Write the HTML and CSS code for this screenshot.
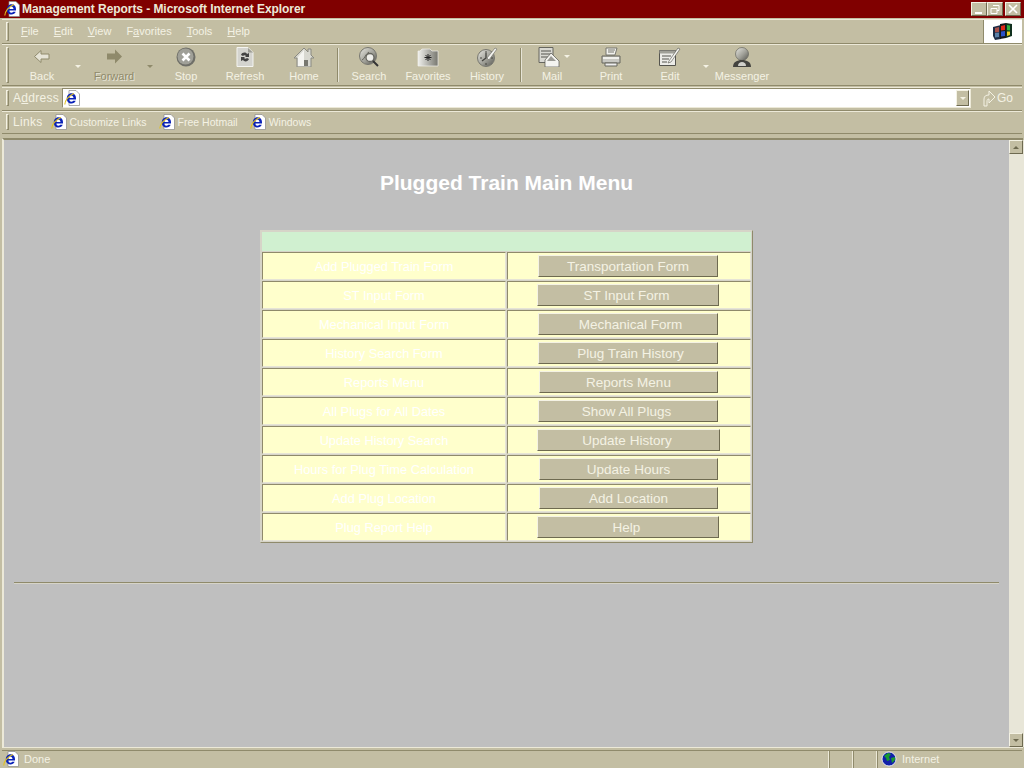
FILE: index.html
```html
<!DOCTYPE html>
<html lang="en">
<head>
    <meta charset="UTF-8">
    <title>Management Reports - Microsoft Internet Explorer</title>
    <link rel="stylesheet" href="styles.css">
</head>
<body>
<svg class="defs" width="0" height="0">
    <defs>
        <linearGradient id="metal" x1="0" y1="0" x2="1" y2="1">
            <stop offset="0" stop-color="#e8e8e2"/>
            <stop offset=".55" stop-color="#a0a098"/>
            <stop offset="1" stop-color="#55554f"/>
        </linearGradient>
        <linearGradient id="folder" x1="0" y1="0" x2="1" y2="0">
            <stop offset="0" stop-color="#f0f0ec"/>
            <stop offset="1" stop-color="#77776f"/>
        </linearGradient>
    </defs>
    <symbol id="ie" viewBox="0 0 16 16">
        <path d="M5 .5h7l3.500 3.500v11.500H5z" fill="#fff" stroke="#8a8a8a" stroke-width=".7"/>
        <path d="M2.800 8h9.200c0-3-2-4.800-4.600-4.800S2.800 5.500 2.800 8.500s2 5 4.600 5c2 0 3.600-1 4.300-2.700H9.200c-.4.600-1 1-1.800 1-1.200 0-2-1-2.100-2.300h6.700V8H5.300c.1-1.300 1-2.500 2.100-2.500S9.400 6.500 9.500 8" fill="#0a22b8"/>
        <path d="M.8 14.500C.8 11 4.500 5.500 10 3.500" fill="none" stroke="#e0c020" stroke-width="1.100"/>
    </symbol>
</svg>
<div class="window">
    <div class="titlebar">
        <svg class="icon16"><use href="#ie"/></svg>
        <span class="title-text">Management Reports - Microsoft Internet Explorer</span>
        <div class="win-buttons">
            <button class="win-btn"><svg width="14" height="12"><path d="M3 10h7" stroke="#fff" stroke-width="2"/></svg></button>
            <button class="win-btn"><svg width="14" height="12"><path d="M5 2.500h6v5h-2M3 5.500h6v5H3z" fill="none" stroke="#fff"/></svg></button>
            <button class="win-btn win-close"><svg width="14" height="12"><path d="M3 2l8 8M11 2l-8 8" stroke="#fff" stroke-width="1.700"/></svg></button>
        </div>
    </div>

    <div class="band menubar">
        <span class="grip"></span>
        <nav class="menu">
            <span><u>F</u>ile</span>
            <span><u>E</u>dit</span>
            <span><u>V</u>iew</span>
            <span>F<u>a</u>vorites</span>
            <span><u>T</u>ools</span>
            <span><u>H</u>elp</span>
        </nav>
        <div class="brand">
            <svg width="20" height="19" viewBox="0 0 20 19">
                <path d="M0 5l8-2v14l-6 1-2-4z" fill="#1c2a44"/>
                <path d="M2 6l4-1v5l-4 .5z" fill="#a8504a"/>
                <path d="M2 11l4-.5v4.500l-4 .5z" fill="#5a80a8"/>
                <path d="M7 2l6-1v15l-6 1z" fill="#15181c"/>
                <path d="M8 4l4-1v5l-4 .5z" fill="#e02818"/>
                <path d="M8 9.500l4-.5v5l-4 .5z" fill="#2a50c8"/>
                <path d="M13 1l6 1v12l-6 2z" fill="#10301e"/>
                <path d="M14 3l3 .5v5l-3-.2z" fill="#30b040"/>
                <path d="M14 9.500l3 .1v3.400l-3 1z" fill="#f0d020"/>
            </svg>
        </div>
    </div>

    <div class="band toolbar">
        <span class="grip"></span>
        <div class="tool">
            <svg class="tool-icon" viewBox="0 0 22 20"><path d="M3.500 9.500l6.500-6v3.500h8v5h-8v3.500z" fill="#e6e4d6" stroke="#8f8a6b"/></svg>
            <span>Back</span>
        </div>
        <span class="caret"></span>
        <div class="tool tool-off">
            <svg class="tool-icon" viewBox="0 0 22 20"><path d="M19 9.500l-7-7v4H4v6h8v4z" fill="#8f8a6b"/></svg>
            <span>Forward</span>
        </div>
        <span class="caret caret-off"></span>
        <div class="tool">
            <svg class="tool-icon" viewBox="0 0 22 20"><circle cx="11" cy="10" r="9.500" fill="#6f6f68"/><circle cx="10.500" cy="9.500" r="8" fill="#a0a098"/><path d="M7.500 6.500l7 7M14.500 6.500l-7 7" stroke="#fff" stroke-width="2.600"/></svg>
            <span>Stop</span>
        </div>
        <div class="tool">
            <svg class="tool-icon" viewBox="0 0 22 20"><path d="M3 .5h11l5 5v14H3z" fill="#d4d4cf" stroke="#f4f4f0"/><path d="M14 1v4.500h5" fill="#9c9c94"/><path d="M7 8c1-3 5-3 6-1l2-1v4h-4l1-1c-1-1-2-1-3 0zM15 12c-1 3-5 3-6 1l-2 1v-4h4l-1 1c1 1 2 1 3 0z" fill="#444"/></svg>
            <span>Refresh</span>
        </div>
        <div class="tool">
            <svg class="tool-icon" viewBox="0 0 22 20"><path d="M11 1L1 11h3v9h14v-9h3l-3-3V2h-3v3z" fill="#d8d8d0" stroke="#8a8a82"/><path d="M11 3l-6 7v9h6z" fill="#f4f4f0"/><path d="M11 13h4v6h-4z" fill="#77776f"/></svg>
            <span>Home</span>
        </div>
        <span class="tool-sep"></span>
        <div class="tool">
            <svg class="tool-icon" viewBox="0 0 22 20"><circle cx="10" cy="9" r="8.500" fill="url(#metal)" stroke="#77776f"/><path d="M4 13c3-1 3-6 7-8" fill="none" stroke="#66665f"/><circle cx="12" cy="10.500" r="4" fill="#eeeeea" stroke="#66665f" stroke-width="1.300"/><path d="M15 14l5 5" stroke="#333" stroke-width="2"/></svg>
            <span>Search</span>
        </div>
        <div class="tool">
            <svg class="tool-icon" viewBox="0 0 22 20"><path d="M1 4h2l2-2h8l2 2h6v15H1z" fill="url(#folder)" stroke="#f0f0ec" stroke-width=".7"/><path d="M11 7v7M7.500 10.500h7M8.500 8l5 5M13.500 8l-5 5" stroke="#222"/></svg>
            <span>Favorites</span>
        </div>
        <div class="tool">
            <svg class="tool-icon" viewBox="0 0 22 20"><circle cx="10" cy="11" r="8.500" fill="url(#metal)" stroke="#77776f"/><path d="M10 4v2M4 11h2M10 16v2M15 11h2" stroke="#44443f"/><path d="M10 6v5l-4 3" fill="none" stroke="#44443f" stroke-width="1.300"/><path d="M11 11l8-10 2 1-8 11z" fill="#f2f2ee" stroke="#77776f" stroke-width=".7"/></svg>
            <span>History</span>
        </div>
        <span class="tool-sep"></span>
        <div class="tool">
            <div class="tool-row">
                <svg class="tool-icon" viewBox="0 0 22 20"><path d="M1 .5h14v15H1z" fill="#d8d8d2" stroke="#66665f"/><path d="M3 4h10M3 7h10M3 10h7" stroke="#55554f"/><path d="M7 13l6-7 8 8v6H7z" fill="#f4f4f0" stroke="#55554f" stroke-width=".7"/><path d="M9 14l4-5 5 5z" fill="#9a9a94"/></svg>
                <span class="caret caret-inline"></span>
            </div>
            <span>Mail</span>
        </div>
        <div class="tool">
            <svg class="tool-icon" viewBox="0 0 22 20"><path d="M6 1h11l-2 7H6z" fill="#f2f2ee" stroke="#77776f"/><path d="M8 3h7M8 5h6" stroke="#77776f"/><path d="M2 9h18v7H2z" fill="#c8c8c2" stroke="#66665f"/><path d="M3 10h16v2H3z" fill="#f0f0ec"/><path d="M5 16h12v3H5z" fill="#eee" stroke="#66665f"/></svg>
            <span>Print</span>
        </div>
        <div class="tool">
            <svg class="tool-icon" viewBox="0 0 22 20"><path d="M.5 3.500h16v15H.5z" fill="#ecece8" stroke="#55554f"/><path d="M.5 3.500h16v3H.5z" fill="#a0a098"/><path d="M3 9h9M3 12h7M3 15h5" stroke="#55554f"/><path d="M10 14l9-13 2 1-9 13-3 1z" fill="#f4f4f0" stroke="#66665f" stroke-width=".7"/></svg>
            <span>Edit</span>
        </div>
        <span class="caret"></span>
        <div class="tool">
            <svg class="tool-icon" viewBox="0 0 22 20"><circle cx="11" cy="7" r="6.500" fill="url(#metal)" stroke="#66665f" stroke-width=".7"/><path d="M2 20c0-5 4-7 9-7s9 2 9 7z" fill="#44443f"/><path d="M7 19c0-3 2-4 4-4s4 1 4 4z" fill="#d0d0ca"/></svg>
            <span>Messenger</span>
        </div>
    </div>

    <div class="band addressbar">
        <span class="grip"></span>
        <span class="addr-label">A<u>d</u>dress</span>
        <div class="addr-box">
            <svg class="icon16"><use href="#ie"/></svg>
            <span class="addr-drop"><span class="caret caret-dark"></span></span>
        </div>
        <div class="go">
            <svg width="14" height="17" viewBox="0 0 14 17"><path d="M2 16V9c0-3 2-4 5-4V1l6 6-6 6V9c-2 0-2 1-2 3v4z" fill="#c3bea3" stroke="#f4f2e4"/></svg>
            <span>Go</span>
        </div>
    </div>

    <div class="band linksbar">
        <span class="grip"></span>
        <span class="links-label">Links</span>
        <span class="link link-first"><svg class="icon16"><use href="#ie"/></svg>Customize Links</span>
        <span class="link"><svg class="icon16"><use href="#ie"/></svg>Free Hotmail</span>
        <span class="link"><svg class="icon16"><use href="#ie"/></svg>Windows</span>
    </div>

    <div class="frame">
        <main class="content">
            <h1>Plugged Train Main Menu</h1>
            <table class="menu-table">
                <tr><td colspan="2" class="head-cell"></td></tr>
                <tr><td class="label">Add Plugged Train Form</td><td class="action"><button class="form-btn btn-a">Transportation Form</button></td></tr>
                <tr><td class="label">ST Input Form</td><td class="action"><button class="form-btn btn-b text-left">ST Input Form</button></td></tr>
                <tr><td class="label">Mechanical Input Form</td><td class="action"><button class="form-btn btn-a text-right">Mechanical Form</button></td></tr>
                <tr><td class="label">History Search Form</td><td class="action"><button class="form-btn btn-a text-right">Plug Train History</button></td></tr>
                <tr><td class="label">Reports Menu</td><td class="action"><button class="form-btn btn-c">Reports Menu</button></td></tr>
                <tr><td class="label">All Plugs for All Dates</td><td class="action"><button class="form-btn btn-a text-left">Show All Plugs</button></td></tr>
                <tr><td class="label">Update History Search</td><td class="action"><button class="form-btn btn-d text-left">Update History</button></td></tr>
                <tr><td class="label">Hours for Plug Time Calculation</td><td class="action"><button class="form-btn btn-c">Update Hours</button></td></tr>
                <tr><td class="label">Add Plug Location</td><td class="action"><button class="form-btn btn-c">Add Location</button></td></tr>
                <tr><td class="label">Plug Report Help</td><td class="action"><button class="form-btn btn-b text-left">Help</button></td></tr>
            </table>
            <hr class="rule">
        </main>
        <div class="scrollbar">
            <span class="scroll-btn"><span class="caret caret-up"></span></span>
            <span class="scroll-btn"><span class="caret caret-olive"></span></span>
        </div>
    </div>

    <div class="statusbar">
        <div class="status-main"><svg class="icon16"><use href="#ie"/></svg><span>Done</span></div>
        <div class="status-pane pane-small"></div>
        <div class="status-pane pane-small"></div>
        <div class="status-pane pane-zone">
            <svg width="16" height="16" viewBox="0 0 16 16"><circle cx="8" cy="8" r="7" fill="#1020a8" stroke="#fff" stroke-width=".8"/><path d="M3 5l4-3 3 1-2 3 1 3-3 1-1-3zM10 7l4-1 0 3-3 3z" fill="#189a30"/></svg>
            <span>Internet</span>
        </div>
    </div>
</div>
</body>
</html>
```

FILE: styles.css
```css
* {
    box-sizing: border-box;
}

html, body {
    margin: 0;
    height: 100%;
    overflow: hidden;
}

body {
    font-family: "Liberation Sans", Arial, sans-serif;
    font-size: 11px;
    color: #f4f2e4;
    background-color: #c3bea3;
}

.defs {
    position: absolute;
}

.window {
    display: flex;
    flex-direction: column;
    width: 1024px;
    height: 768px;
}

.icon16 {
    width: 16px;
    height: 16px;
    flex: none;
}

/* title bar */
.titlebar {
    display: flex;
    align-items: center;
    height: 18px;
    padding: 0 3px 0 4px;
    background-color: #800000;
    flex: none;
}

.title-text {
    margin-left: 2px;
    font-size: 12px;
    font-weight: bold;
    letter-spacing: -.06px;
    color: #ece9d8;
}

.win-buttons {
    display: flex;
    margin-left: auto;
}

.win-btn {
    display: flex;
    align-items: center;
    justify-content: center;
    width: 16px;
    height: 14px;
    padding: 0;
    background-color: #c3bea3;
    border: 1px solid;
    border-color: #f4f2e4 #6e6a50 #6e6a50 #f4f2e4;
}

.win-close {
    margin-left: 2px;
}

/* toolbar bands */
.band {
    display: flex;
    align-items: center;
    margin: 0 2px;
    border-top: 1px solid #ece9d8;
    border-bottom: 1px solid #8f8a6b;
    flex: none;
}

.grip {
    width: 3px;
    height: calc(100% - 4px);
    margin-left: 4px;
    background-color: #c3bea3;
    border: 1px solid;
    border-color: #f4f2e4 #8f8a6b #8f8a6b #f4f2e4;
    flex: none;
}

.menubar {
    height: 25px;
    margin-top: 1px;
}

.menu {
    display: flex;
    gap: 15px;
    margin-left: 12px;
    padding-bottom: 2px;
    font-size: 11px;
}

.brand {
    display: flex;
    align-items: center;
    justify-content: center;
    width: 39px;
    height: 23px;
    margin-left: auto;
    background-color: #fff;
    border-left: 1px solid #8f8a6b;
}

.toolbar {
    align-items: stretch;
    height: 42px;
    padding: 2px 0 2px;
}

.toolbar .grip {
    height: auto;
    margin-right: 5px;
}

.tool {
    display: flex;
    flex-direction: column;
    align-items: center;
    justify-content: space-between;
    width: 56px;
    margin-right: 3px;
    font-size: 11px;
    line-height: 14px;
    flex: none;
}

.tool-off {
    color: #8f8a6b;
    text-shadow: 1px 1px 0 #e6e4d6;
}

.tool-row {
    display: flex;
    gap: 4px;
    padding-left: 4px;
}

.tool-icon {
    width: 22px;
    height: 20px;
}

.tool-sep {
    width: 2px;
    margin: 1px 2px;
    background-color: #8f8a6b;
    border-right: 1px solid #e6e4d6;
    flex: none;
}

.caret {
    position: relative;
    width: 16px;
    height: 3px;
    margin: 18px 0 0 -3px;
    flex: none;
}

.caret::after {
    content: "";
    position: absolute;
    top: 0;
    left: 5px;
    border-style: solid;
    border-width: 3px 3px 0;
    border-color: #f4f2e4 transparent transparent;
}

.caret-off::after {
    border-top-color: #8f8a6b;
}

.caret-inline {
    width: 6px;
    margin: 8px 0 0;
}

.caret-inline::after {
    left: 0;
}

.caret-dark,
.caret-olive,
.caret-up {
    width: 6px;
    margin: 0;
}

.caret-dark::after,
.caret-olive::after {
    left: 0;
    border-top-color: #6e6a50;
}

.caret-dark::after {
    border-top-color: #f4f2e4;
}

.caret-up::after {
    left: 0;
    border-width: 0 3px 3px;
    border-color: transparent transparent #6e6a50;
}

.addressbar {
    height: 24px;
    margin-top: 1px;
    padding-bottom: 2px;
}

.addr-label {
    width: 46px;
    margin-left: 4px;
    font-size: 12px;
    letter-spacing: .3px;
}

.addr-box {
    display: flex;
    align-items: center;
    width: 909px;
    height: 20px;
    margin-left: 3px;
    padding: 0 1px;
    background-color: #fff;
    border: 1px solid;
    border-color: #8f8a6b #ece9d8 #ece9d8 #8f8a6b;
}

.addr-drop {
    display: flex;
    align-items: center;
    justify-content: center;
    width: 13px;
    height: 16px;
    margin-left: auto;
    background-color: #c3bea3;
    border: 1px solid;
    border-color: #f4f2e4 #6e6a50 #6e6a50 #f4f2e4;
}

.go {
    display: flex;
    align-items: center;
    gap: 1px;
    margin-left: 11px;
    font-size: 12px;
}

.linksbar {
    height: 23px;
    padding-bottom: 1px;
}

.links-label {
    margin-left: 4px;
    font-size: 12px;
    letter-spacing: .3px;
}

.link {
    display: flex;
    align-items: center;
    gap: 3px;
    margin-left: 12px;
    font-size: 10.5px;
}

.link-first {
    margin-left: 8px;
}

/* page area */
.frame {
    display: flex;
    flex: 1;
    min-height: 0;
    margin: 4px 1px 2px 2px;
    background-color: #bfbfbf;
    border-top: 2px solid #8f8a6b;
    border-left: 2px solid #ece9d8;
    border-bottom: 1px solid #ece9d8;
}

.content {
    flex: 1;
    padding: 0 10px;
}

h1 {
    margin: 31px 0 35px;
    font-size: 21px;
    line-height: 24px;
    font-weight: bold;
    text-align: center;
    color: #fff;
}

.menu-table {
    width: 493px;
    margin: 0 auto;
    border-collapse: separate;
    border-spacing: 1px;
    background-color: #d6d4c8;
    border: 1px solid;
    border-color: #d6d4c8 #8f8a6b #8f8a6b #d6d4c8;
}

.menu-table td {
    padding: 0;
    height: 28px;
    border: 1px solid;
    border-color: #8f8a6b #e6e4d6 #e6e4d6 #8f8a6b;
    background-color: #ffffcc;
}

.menu-table .head-cell {
    height: 19px;
    border: 0;
    background-color: #d0f0d0;
}

.menu-table .label {
    width: 244px;
    padding-top: 1px;
    font-size: 12.8px;
    text-align: center;
    color: #fff;
}

.menu-table .action {
    padding-left: 30px;
}

.form-btn {
    display: block;
    height: 22px;
    padding: 0;
    font-family: "Liberation Sans", Arial, sans-serif;
    font-size: 13.5px;
    color: #f4f2e4;
    background-color: #c3bea3;
    border: 1px solid;
    border-color: #f4f2e4 #6e6a50 #6e6a50 #f4f2e4;
}

.btn-a {
    width: 180px;
}

.btn-b {
    width: 182px;
    margin-left: -1px;
}

.btn-c {
    width: 179px;
    margin-left: 1px;
}

.btn-d {
    width: 183px;
    margin-left: -1px;
}

.text-left {
    padding-right: 3px;
}

.text-right {
    padding-left: 5px;
}

.rule {
    margin: 39px 0 0;
    width: 985px;
    height: 2px;
    border: 0;
    border-top: 1px solid #8f8a6b;
    border-bottom: 1px solid #d6d4c8;
}

.scrollbar {
    display: flex;
    flex-direction: column;
    justify-content: space-between;
    width: 15px;
    background-color: #e8e6d8;
    flex: none;
}

.scroll-btn {
    display: flex;
    align-items: center;
    justify-content: center;
    width: 14px;
    height: 14px;
    background-color: #c3bea3;
    border: 1px solid;
    border-color: #f4f2e4 #6e6a50 #6e6a50 #f4f2e4;
}

/* status bar */
.statusbar {
    display: flex;
    align-items: center;
    height: 18px;
    margin: 0 2px;
    border-top: 1px solid #8f8a6b;
    flex: none;
}

.status-main {
    display: flex;
    align-items: center;
    gap: 5px;
    width: 827px;
    padding: 0 0 2px 1px;
    font-size: 11px;
}

.status-pane {
    display: flex;
    align-items: center;
    height: 100%;
    border-left: 1px solid #8f8a6b;
    box-shadow: -1px 0 0 #ece9d8;
}

.pane-small {
    width: 24px;
}

.pane-zone {
    flex: 1;
    gap: 5px;
    padding: 0 0 2px 3px;
    font-size: 11px;
}
```
